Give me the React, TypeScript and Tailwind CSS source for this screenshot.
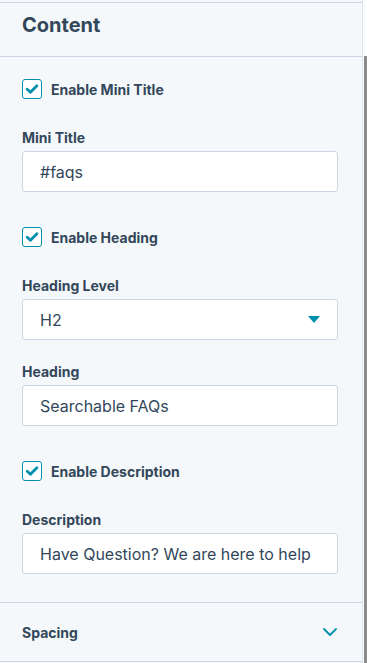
function Checkbox({ label }: { label: string }) {
  return (
    <label className="flex items-center gap-[9px] h-5">
      <span className="w-5 h-5 rounded-[3px] border border-[#0091ae] bg-white flex items-center justify-center">
        <svg viewBox="0 0 16 16" className="w-[14px] h-[14px]">
          <path d="M2.5 8.3 L6.2 11.8 L13.6 4.2" fill="none" stroke="#0091ae" strokeWidth="3.2" strokeLinecap="round" strokeLinejoin="round" />
        </svg>
      </span>
      <span className="text-[14px] font-bold text-[#33475b]">{label}</span>
    </label>
  );
}

function Field({ label, value, select }: { label: string; value: string; select?: boolean }) {
  return (
    <div className="pt-[2px]">
      <div className="text-[14px] font-bold text-[#33475b] leading-5 mb-[3px]">{label}</div>
      <div className="h-[41px] bg-white border border-[#cbd6e2] rounded-[3px] flex items-center justify-between pl-[17px] pr-[17px]">
        <span className="text-[16px] text-[#33475b] pt-[1px]">{value}</span>
        {select && (
          <svg viewBox="0 0 12 8" className="w-3 h-2">
            <path d="M0 0 H12 L6 7 Z" fill="#0091ae" />
          </svg>
        )}
      </div>
    </div>
  );
}

export default function App() {
  return (
    <div className="w-[367px] h-[663px] bg-[#fbfcfd] flex overflow-hidden" style={{ fontFamily: 'Inter, Lato, sans-serif' }}>
      <div className="w-[363px] h-full bg-[#f5f8fa] border-r border-[#dfe3eb] pt-[2px]">
        <div className="border-t border-[#cbd6e2] h-[54px] px-[22px] flex items-start pt-[7px]">
          <h2 className="text-[20px] font-bold text-[#33475b]">Content</h2>
        </div>
        <div className="border-t border-[#cbd6e2] pl-[22px] pr-[24px] pt-[22px] pb-[28px]">
          <Checkbox label="Enable Mini Title" />
          <div className="mt-[27px]">
            <Field label="Mini Title" value="#faqs" />
          </div>
          <div className="mt-[35px]">
            <Checkbox label="Enable Heading" />
          </div>
          <div className="mt-[27px]">
            <Field label="Heading Level" value="H2" select />
          </div>
          <div className="mt-[20px]">
            <Field label="Heading" value="Searchable FAQs" />
          </div>
          <div className="mt-[35px]">
            <Checkbox label="Enable Description" />
          </div>
          <div className="mt-[27px]">
            <Field label="Description" value="Have Question? We are here to help" />
          </div>
        </div>
        <div className="border-t border-[#cbd6e2] border-b h-[60px] pl-[22px] pr-[25px] flex items-center justify-between">
          <span className="text-[14px] font-bold text-[#33475b]">Spacing</span>
          <svg viewBox="0 0 14 8" className="w-[14px] h-2">
            <path d="M1 1 L7 7 L13 1" fill="none" stroke="#0091ae" strokeWidth="1.8" strokeLinecap="round" strokeLinejoin="round" />
          </svg>
        </div>
      </div>
      <div className="flex-1 flex justify-end pt-[56px]">
        <div className="w-[3px] h-full bg-[#8a8a8a]" />
      </div>
    </div>
  );
}
